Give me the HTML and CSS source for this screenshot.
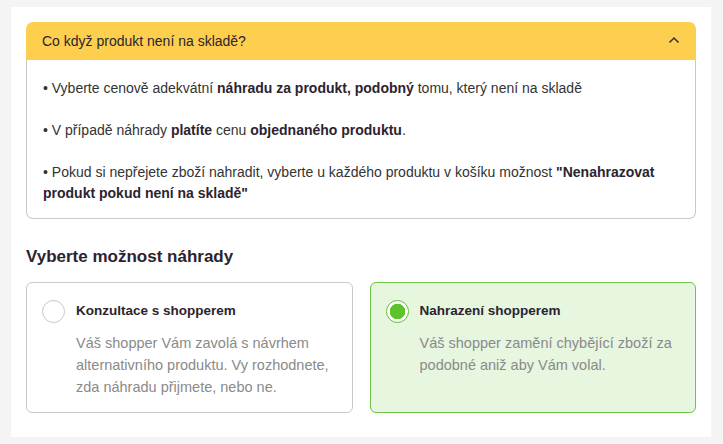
FILE: index.html
```html
<!DOCTYPE html>
<html lang="cs">
<head>
<meta charset="utf-8">
<link rel="stylesheet" href="styles.css">
</head>
<body>
<div class="page">
  <section class="accordion">
    <div class="acc-head">
      <span class="acc-title">Co když produkt není na skladě?</span>
      <svg class="chev" width="12" height="8" viewBox="0 0 12 8"><path d="M1.5 6.5 L6 2 L10.5 6.5" fill="none" stroke="#333" stroke-width="1.5"/></svg>
    </div>
    <div class="acc-body">
      <p>• Vyberte cenově adekvátní <b>náhradu za produkt, podobný</b> tomu, který není na skladě</p>
      <p>• V případě náhrady <b>platíte</b> cenu <b>objednaného produktu</b>.</p>
      <p>• Pokud si nepřejete zboží nahradit, vyberte u každého produktu v košíku možnost <b>"Nenahrazovat produkt pokud není na skladě"</b></p>
    </div>
  </section>
  <h2 class="heading">Vyberte možnost náhrady</h2>
  <div class="options">
    <div class="option">
      <span class="radio"></span>
      <div class="opt-text">
        <div class="opt-title">Konzultace s shopperem</div>
        <div class="opt-desc">Váš shopper Vám zavolá s návrhem alternativního produktu. Vy rozhodnete, zda náhradu přijmete, nebo ne.</div>
      </div>
    </div>
    <div class="option selected">
      <span class="radio"></span>
      <div class="opt-text">
        <div class="opt-title">Nahrazení shopperem</div>
        <div class="opt-desc">Váš shopper zamění chybějící zboží za podobné aniž aby Vám volal.</div>
      </div>
    </div>
  </div>
</div>
</body>
</html>
```
FILE: styles.css
```css
html, body { margin: 0; padding: 0; }
body {
  background: #f4f4f4;
  font-family: "Liberation Sans Narrow", "Liberation Sans", Arial, sans-serif;
  color: #2b2430;
}
.page {
  margin: 7px 0 0 11px;
  width: 700px;
  height: 430px;
  box-sizing: border-box;
  background: #fff;
  padding: 15px 15px 0 15px;
}
.accordion { display: flex; flex-direction: column; }
.acc-head {
  height: 38px;
  background: #fecf4e;
  border-radius: 7px 7px 0 0;
  display: flex;
  align-items: center;
  justify-content: space-between;
  padding: 0 16px 0 16px;
}
.acc-title { font-size: 14px; color: #2b2430; }
.chev { display: block; margin-top: -2px; }
.acc-body {
  border: 1px solid #c9c9c9;
  border-top: none;
  border-radius: 0 0 7px 7px;
  padding: 18px 16px 14px 16px;
  font-size: 14px;
  line-height: 21px;
  color: #333;
}
.acc-body p { margin: 0 0 21px 0; }
.acc-body p:last-child { margin-bottom: 0; }
.acc-body b { color: #2b2430; }
.heading {
  margin: 26px 0 13px 0;
  font-size: 17px;
  font-weight: 600;
  line-height: 24px;
  color: #2b2430;
}
.options { display: flex; gap: 17px; }
.option {
  flex: 1;
  height: 131px;
  box-sizing: border-box;
  border: 1px solid #c9c9c9;
  border-radius: 6px;
  display: flex;
  gap: 11px;
  padding: 17px 15px;
}
.option.selected { border-color: #6cc644; background: #e6f6df; }
.radio {
  flex: none;
  width: 23px; height: 23px;
  border: 1px solid #c8c8c8;
  border-radius: 50%;
  box-sizing: border-box;
  background: #fff;
}
.selected .radio {
  border: 1.5px solid #5dc22c;
  background: radial-gradient(circle, #5dc22c 0 7.5px, #fff 8px);
}
.opt-title { font-size: 13.5px; font-weight: 700; line-height: 22px; color: #2b2430; margin-bottom: 10px; }
.opt-desc { font-size: 14.5px; line-height: 22px; color: #8a8a8a; }
```
